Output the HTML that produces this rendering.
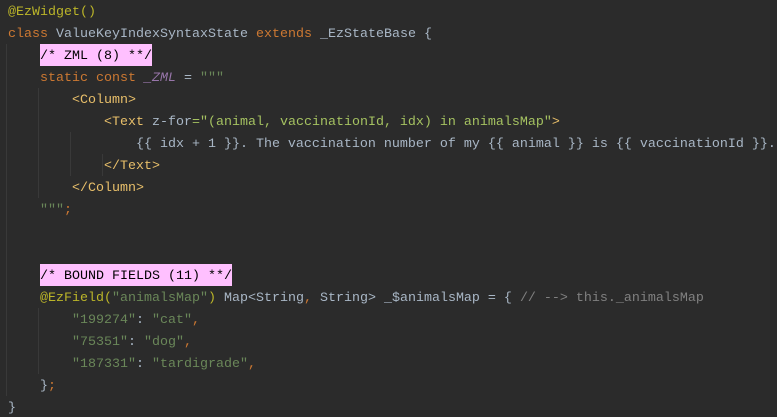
<!DOCTYPE html>
<html><head><style>
html,body{margin:0;padding:0;background:#2b2b2b;width:777px;height:417px;overflow:hidden}
.c{position:relative;top:2px;font-family:"Liberation Mono",monospace;font-size:13.33px;color:#a9b7c6}
.l{position:absolute;left:8px;height:22px;line-height:22px;white-space:pre}
.g{position:absolute;width:1px;background:#393939}
.k{color:#cc7832}.a{color:#bbb529}.s{color:#6a8759}.t{color:#e8bf6a}.v{color:#a5c261}.i{color:#9876aa;font-style:italic}.cm{color:#808080}
.h{background:#ffc0ff;color:#000;display:inline-block;height:22px;vertical-align:top;position:relative;top:-2px;line-height:26px}
.q{color:#a9b7c6}
</style></head><body><div class="c">
<div class="g" style="left:6px;top:42px;height:352px"></div>
<div class="g" style="left:38px;top:86px;height:110px"></div>
<div class="g" style="left:70px;top:130px;height:44px"></div>
<div class="g" style="left:102px;top:152px;height:22px"></div>
<div class="g" style="left:38px;top:306px;height:66px"></div>
<div class="l" style="top:0"><span class="a">@EzWidget</span><span class="a">()</span></div>
<div class="l" style="top:22px"><span class="k">class </span>ValueKeyIndexSyntaxState <span class="k">extends </span>_EzStateBase {</div>
<div class="l" style="top:44px">    <span class="h">/* ZML (8) **/</span></div>
<div class="l" style="top:66px">    <span class="k">static const </span><span class="i">_ZML</span> = <span class="s">"""</span></div>
<div class="l" style="top:88px">        <span class="t">&lt;Column&gt;</span></div>
<div class="l" style="top:110px">            <span class="t">&lt;Text </span><span class="q">z-for</span><span class="v">="(animal, vaccinationId, idx) in animalsMap"</span><span class="t">&gt;</span></div>
<div class="l" style="top:132px">                {{ idx + 1 }}. The vaccination number of my {{ animal }} is {{ vaccinationId }}.</div>
<div class="l" style="top:154px">            <span class="t">&lt;/Text&gt;</span></div>
<div class="l" style="top:176px">        <span class="t">&lt;/Column&gt;</span></div>
<div class="l" style="top:198px">    <span class="s">"""</span><span class="k">;</span></div>
<div class="l" style="top:264px">    <span class="h">/* BOUND FIELDS (11) **/</span></div>
<div class="l" style="top:286px">    <span class="a">@EzField</span><span class="a">(</span><span class="s">"animalsMap"</span><span class="a">)</span> Map&lt;String<span class="k">, </span>String&gt; _$animalsMap = { <span class="cm">// --&gt; this._animalsMap</span></div>
<div class="l" style="top:308px">        <span class="s">"199274"</span>: <span class="s">"cat"</span><span class="k">,</span></div>
<div class="l" style="top:330px">        <span class="s">"75351"</span>: <span class="s">"dog"</span><span class="k">,</span></div>
<div class="l" style="top:352px">        <span class="s">"187331"</span>: <span class="s">"tardigrade"</span><span class="k">,</span></div>
<div class="l" style="top:374px">    }<span class="k">;</span></div>
<div class="l" style="top:396px">}</div>
</div></body></html>
